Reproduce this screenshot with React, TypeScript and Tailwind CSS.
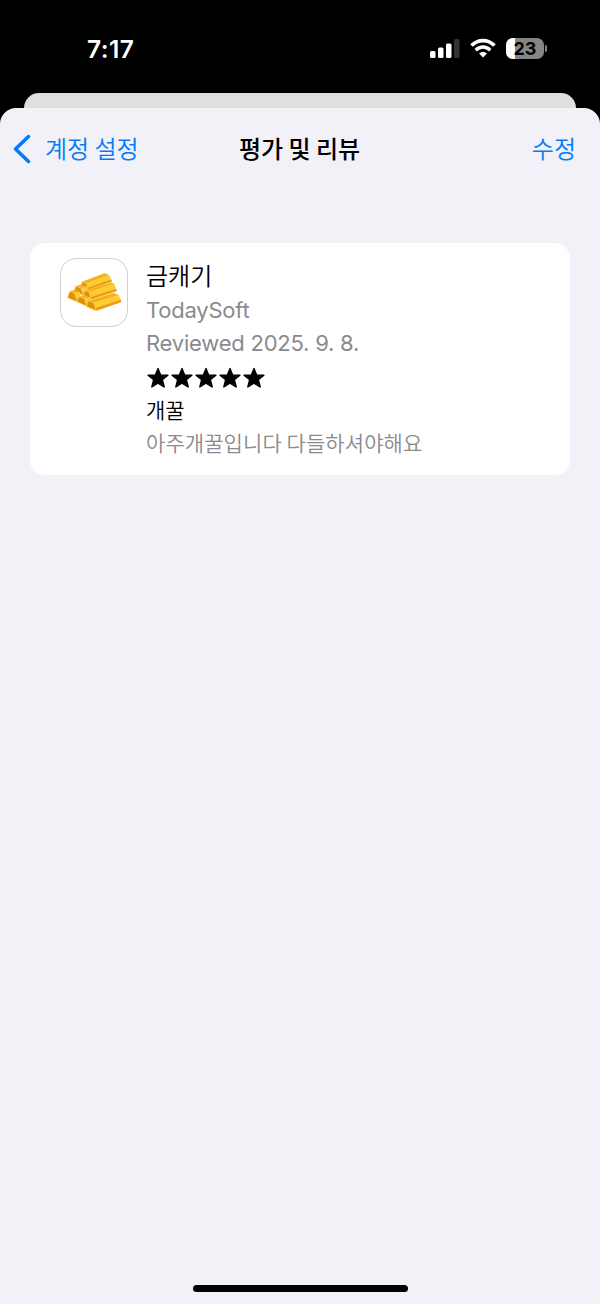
const korean = "font-['Noto_Sans_CJK_KR',sans-serif]"
const latin = "font-[Inter,sans-serif]"

// back to front
const bars = [
  {
    top: "M95 96 L163 70 L178 76 L109 101 Z",
    side: "M109 101 L178 76 L186 95 L113 121 Z",
    shade: "M112 114 L184 89 L186 95 L113 121 Z",
    end: "M95 96 L109 101 L113 121 L90 110 Z",
  },
  {
    top: "M76 109 L90 105 L108 111 L92 116 Z",
    side: "M92 116 L108 111 L110 128 L98 137 Z",
    shade: "M96 130 L108 122 L110 128 L98 137 Z",
    end: "M76 109 L92 116 L98 137 L70 124 Z",
  },
  {
    top: "M104 122 L184 98 L194 103 L117 128 Z",
    side: "M117 128 L194 103 L201 124 L122 150 Z",
    shade: "M120 143 L199 118 L201 124 L122 150 Z",
    end: "M104 122 L117 128 L122 150 L99 139 Z",
  },
  {
    top: "M57 125 L70 121 L88 128 L73 132 Z",
    side: "M73 132 L88 128 L92 147 L79 156 Z",
    shade: "M77 149 L91 141 L92 147 L79 156 Z",
    end: "M57 125 L73 132 L79 157 L50 145 Z",
  },
  {
    top: "M86 141 L99 137 L118 144 L103 148 Z",
    side: "M103 148 L118 144 L121 160 L108 169 Z",
    shade: "M107 162 L120 154 L121 160 L108 169 Z",
    end: "M86 141 L103 148 L108 170 L80 158 Z",
  },
  {
    top: "M114 154 L190 130 L208 137 L131 161 Z",
    side: "M131 161 L208 137 L215 158 L138 185 Z",
    shade: "M136 176 L213 151 L215 158 L138 185 Z",
    end: "M114 154 L131 161 L138 185 L108 172 Z",
  },
]

function GoldBars() {
  return (
    <svg viewBox="30 26 204 204" className="h-full w-full" aria-hidden="true">
      {bars.map((bar) => (
        <g key={bar.end} strokeLinejoin="round">
          <path d={bar.top} fill="#f5b01a" stroke="#fbcf48" strokeWidth="1" />
          <path d={bar.side} fill="#ffcb32" />
          <path d={bar.shade} fill="#e99c12" />
          <path d={bar.end} fill="#e2900b" stroke="#fbd558" strokeWidth="2" />
        </g>
      ))}
    </svg>
  )
}

function Star() {
  return (
    <svg viewBox="0 0 24 24" className="h-6 w-6" aria-hidden="true">
      <path
        d="M12 2.4 L14.6 9 L21.9 9.3 L16.3 13.8 L18.2 21 L12 17.1 L5.8 21 L7.7 13.8 L2.1 9.3 L9.4 9 Z"
        fill="#000"
        stroke="#000"
        strokeWidth="1.4"
        strokeLinejoin="round"
      />
    </svg>
  )
}

function StatusBar() {
  return (
    <div className="flex h-[93px] items-start justify-between pl-[87px] pr-[53px]">
      <span className={`${latin} mt-[33px] text-[24.5px] font-semibold leading-8 tracking-[0.4px] text-white`}>7:17</span>
      <div className="mt-[37px] flex h-[22px] items-center">
        <svg viewBox="0 0 30 20" className="h-5 w-[30px]" aria-hidden="true">
          <rect x="0" y="13" width="5.5" height="7" rx="1.5" fill="#fff" />
          <rect x="8" y="9.5" width="5.5" height="10.5" rx="1.5" fill="#fff" />
          <rect x="16" y="5.5" width="5.5" height="14.5" rx="1.5" fill="#fff" />
          <rect x="24" y="1" width="5.5" height="19" rx="1.5" fill="#333" />
        </svg>
        <svg viewBox="0 0 26 20" className="ml-2.5 h-5 w-[26px]" aria-hidden="true">
          <path d="M1.5 7.6 C8 .9 18 .9 24.5 7.6" fill="none" stroke="#fff" strokeWidth="3.6" />
          <path d="M5.7 12.2 C10 8 16 8 20.3 12.2" fill="none" stroke="#fff" strokeWidth="3.4" />
          <path d="M9 15.6 C11.3 13.5 14.7 13.5 17 15.6 L13 19.6 Z" fill="#fff" />
        </svg>
        <div className="relative ml-[10px] flex h-[21px] w-[38px] items-center justify-center overflow-hidden rounded-[7px] bg-[#858585]">
          <div className="absolute inset-y-0 left-0 w-[9px] bg-white" />
          <span className={`${latin} relative pt-0.5 text-[18px] font-bold leading-none text-black`}>23</span>
        </div>
        <div className="ml-px h-[7px] w-0.5 rounded-r-full bg-[#858585]" />
      </div>
    </div>
  )
}

export default function App() {
  return (
    <div className="flex h-[1304px] w-[600px] flex-col overflow-hidden bg-black">
      <StatusBar />
      {/* Sheet behind */}
      <div className="mx-6 h-[15px] shrink-0 rounded-t-[15px] bg-[#dfdfdf]" />

      <main className="flex flex-1 flex-col rounded-t-[16px] bg-[#f2f1f7]">
        <header className={`${korean} grid h-[81px] grid-cols-3 items-center pl-[13px] pr-6 text-[24px]`}>
          <button className="flex items-center text-[#007aff]">
            <svg viewBox="0 0 18 30" className="h-[30px] w-[18px]" aria-hidden="true">
              <path d="M15.5 2.5 L2.5 15 L15.5 27.5" fill="none" stroke="currentColor" strokeWidth="3.5" strokeLinecap="round" strokeLinejoin="round" />
            </svg>
            <span className="-mt-0.5 ml-3.5 whitespace-nowrap font-[350]">계정 설정</span>
          </button>
          <h1 className="-mt-0.5 whitespace-nowrap pl-[10px] text-center font-medium">평가 및 리뷰</h1>
          <button className="-mt-0.5 text-right font-[350] text-[#007aff]">수정</button>
        </header>

        <section className="mx-[30px] mt-[54px] flex h-[232px] rounded-[15px] bg-white pl-[29.5px] pt-[15px]">
          <div className="h-[68.5px] w-[68.5px] rounded-[16px] border border-[#d0d0d0]">
            <GoldBars />
          </div>
          <div className={`${korean} ml-[18px] text-[21px] font-[350] text-black`}>
            <h2 className="-mt-px h-[36px] text-[24px] leading-[35px]">금캐기</h2>
            <p className={`${latin} h-[33px] text-[22px] font-normal leading-[34px] tracking-[-0.22px] text-[#8a8a8e]`}>TodaySoft</p>
            <p className={`${latin} h-[33px] text-[22px] font-normal leading-[34px] tracking-[-0.22px] text-[#8a8a8e]`}>Reviewed 2025. 9. 8.</p>
            <div className="flex h-[34px] items-end pb-[3px]">
              {[1, 2, 3, 4, 5].map((n) => (
                <Star key={n} />
              ))}
            </div>
            <h3 className="h-[33px] leading-[32px]">개꿀</h3>
            <p className="h-8 whitespace-nowrap leading-[32px] tracking-[0.08px] text-[#8a8a8e]">아주개꿀입니다 다들하셔야해요</p>
          </div>
        </section>

        {/* Home indicator */}
        <div className="mx-auto mb-3 mt-auto h-[7px] w-[215px] rounded-full bg-black" />
      </main>
    </div>
  )
}
